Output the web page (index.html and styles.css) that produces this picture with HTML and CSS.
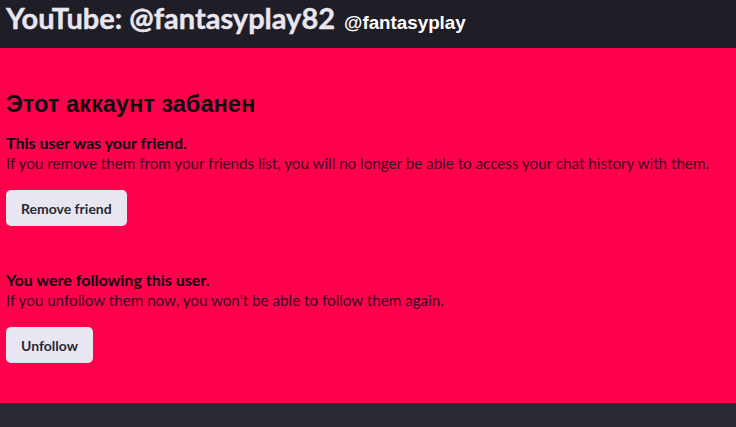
FILE: index.html
```html
<!DOCTYPE html>
<html lang="ru">
<head>
<meta charset="utf-8">
<link rel="stylesheet" href="styles.css">
</head>
<body>
<header class="top">
  <h1 class="title">YouTube: @fantasyplay82</h1>
  <span class="handle">@fantasyplay</span>
</header>
<main class="banned">
  <h2 class="heading">Этот аккаунт забанен</h2>
  <section class="block">
    <p class="lead">This user was your friend.</p>
    <p class="desc">If you remove them from your friends list, you will no longer be able to access your chat history with them.</p>
    <button class="btn">Remove friend</button>
  </section>
  <section class="block">
    <p class="lead">You were following this user.</p>
    <p class="desc">If you unfollow them now, you won't be able to follow them again.</p>
    <button class="btn">Unfollow</button>
  </section>
</main>
<footer class="bottom"></footer>
</body>
</html>
```
FILE: styles.css
```css
* { box-sizing: border-box; }
html, body { margin: 0; padding: 0; }
body {
  background: #2a2833;
  font-family: "Lato", "Liberation Sans", sans-serif;
  height: 427px;
  overflow: hidden;
}
.top {
  background: #1f1d26;
  height: 48px;
  display: flex;
  align-items: baseline;
  gap: 9px;
  padding: 0 6px;
}
.title {
  margin: 0;
  font-family: "Lato", sans-serif;
  font-weight: 700;
  font-size: 29px;
  line-height: 36px;
  color: #e8e6f0;
  -webkit-text-stroke: 0.4px #e8e6f0;
}
.handle {
  font-family: "Liberation Sans", sans-serif;
  font-weight: 700;
  font-size: 18.8px;
  color: #ffffff;
}
.banned {
  background: #ff004d;
  height: 355px;
  padding: 0 6px;
  color: #1a0a14;
}
.heading {
  margin: 0;
  padding-top: 42px;
  font-family: "Liberation Sans", sans-serif;
  font-weight: 700;
  font-size: 23.6px;
  line-height: 28px;
  color: #0e0a12;
}
.block { margin-top: 14px; }
.block + .block { margin-top: 43px; }
.lead {
  margin: 0;
  font-family: "Lato", sans-serif;
  font-weight: 700;
  font-size: 16px;
  line-height: 21px;
  color: #0e0a12;
}
.desc {
  margin: 0;
  font-family: "Lato", sans-serif;
  font-size: 15.2px;
  line-height: 21px;
  color: #3a0a22;
}
.btn {
  margin-top: 16px;
  display: block;
  border: 0;
  border-radius: 5px;
  background: #e8e6f0;
  color: #2a2833;
  font-family: "Lato", sans-serif;
  font-weight: 700;
  font-size: 14px;
  height: 36px;
  padding: 0 15px;
}
.bottom { height: 24px; }
```
